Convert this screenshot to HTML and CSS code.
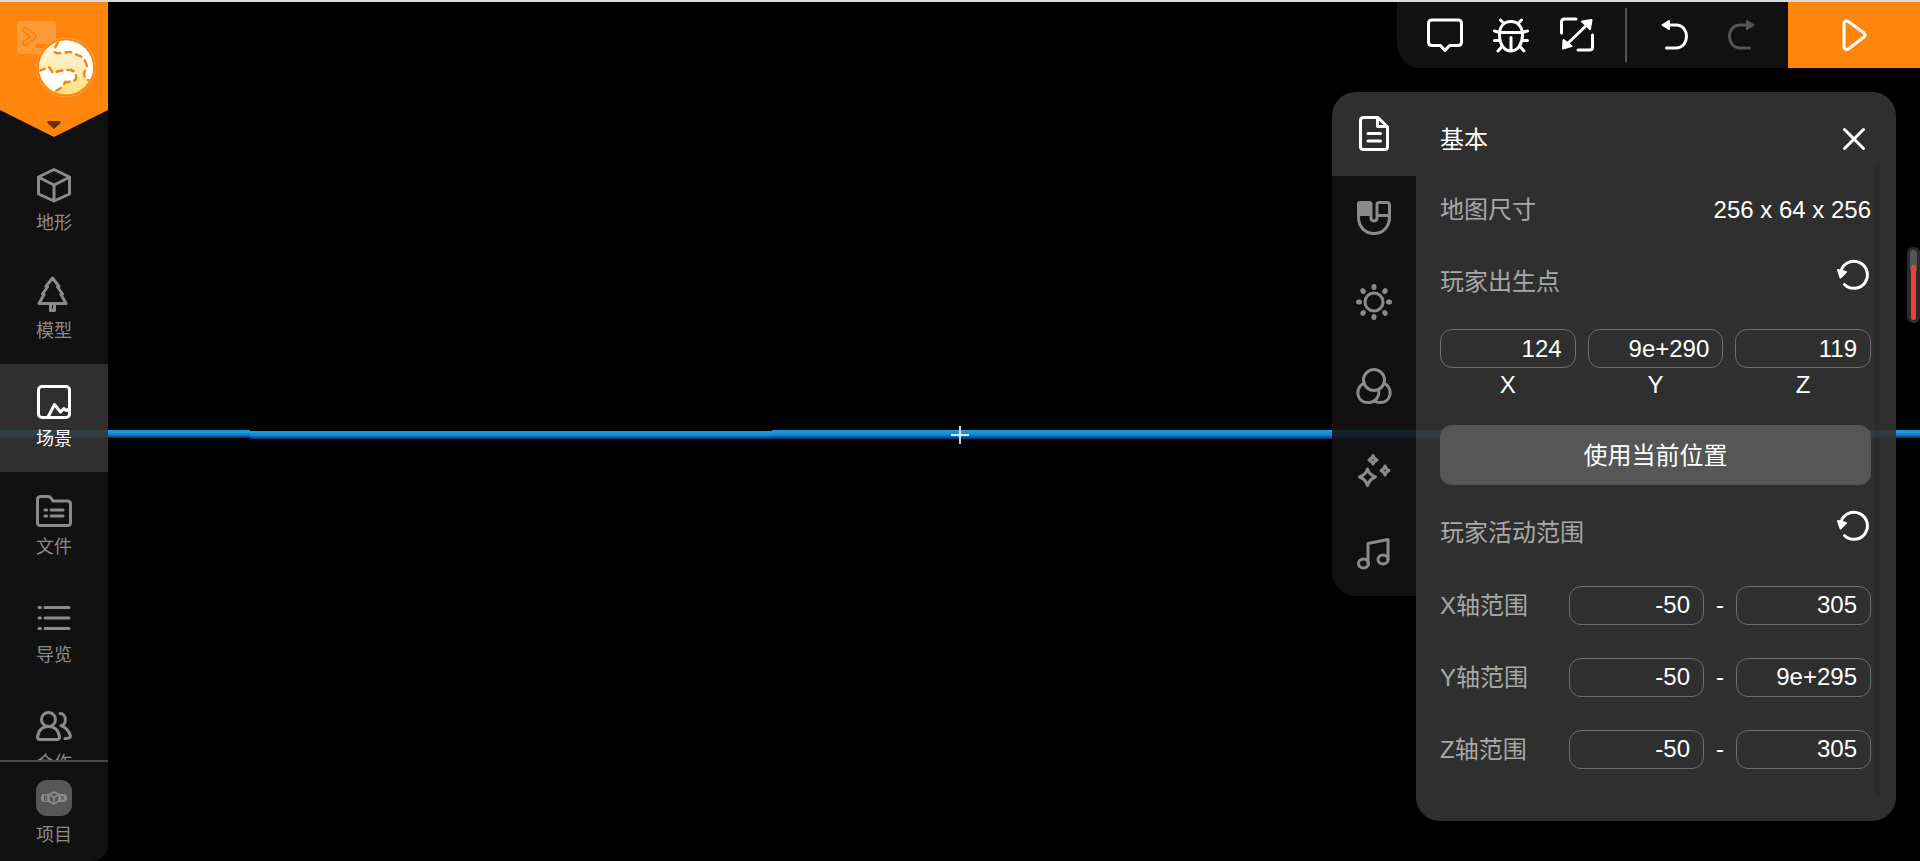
FILE: index.html
```html
<!DOCTYPE html>
<html lang="zh-CN">
<head>
<meta charset="utf-8">
<meta name="viewport" content="width=device-width, initial-scale=1">
<title>场景</title>
<link rel="stylesheet" href="styles.css">
</head>
<body>
<main class="editor">
  <div class="scene">
    <div class="horizon">
      <div class="water water-near"></div>
      <div class="water water-low"></div>
      <div class="water water-deep"></div>
      <div class="water water-high"></div>
      <div class="crosshair"></div>
    </div>
  </div>

  <aside class="sidebar">
    <button class="brand" aria-label="菜单">
      <svg width="108" height="135" viewBox="0 2 108 135">
        <defs>
          <linearGradient id="globe" x1="0" y1="0" x2="0" y2="1"><stop offset="0" stop-color="#fff8e8"/><stop offset="1" stop-color="#ffe27d"/></linearGradient>
          <clipPath id="disc"><circle cx="66" cy="67.500" r="27"/></clipPath>
        </defs>
        <path d="M0 2H108V110L54 137L0 110Z" fill="#ff850c"/>
        <rect x="17" y="21" width="39" height="33" rx="3" fill="#ff9a38"/>
        <path d="M25 30L34 36.500L25 43" fill="none" stroke="#f9800c" stroke-width="6" stroke-linecap="round" stroke-linejoin="round"/>
        <path d="M25 30L34 36.500L25 43" fill="none" stroke="#ff9533" stroke-width="3" stroke-linecap="round" stroke-linejoin="round"/>
        <path d="M37 46H46" stroke="#f9800c" stroke-width="4" stroke-linecap="round"/>
        <circle cx="66" cy="67.500" r="29.500" fill="#ff850c" stroke="#ffa03f" stroke-width="1"/>
        <circle cx="66" cy="67.500" r="27" fill="url(#globe)"/>
        <g clip-path="url(#disc)">
          <path d="M57 40L54 50Q54 54 60 53L70 52L80 56Q85 58 87 66L84 73Q84 78 91 82L100 70L90 36Z" fill="#fff"/>
          <path d="M38 71L49 67L53 73Q60 70 71 70Q77 72 76 79Q74 82 65 82Q62 90 52 92L35 88Z" fill="#fff"/>
          <path d="M58 42L54 50Q54 54 60 53L70 52L80 56Q85 58 87 66L84 73Q84 78 91 82" fill="none" stroke="#f98310" stroke-width="2.400" stroke-dasharray="6 5" stroke-linecap="round"/>
          <path d="M39 71L49 67L53 73Q60 70 71 70Q77 72 76 79Q74 82 65 82Q62 90 52 92" fill="none" stroke="#f98310" stroke-width="2.400" stroke-dasharray="6 5" stroke-linecap="round"/>
        </g>
        <path d="M48 121H60Q61.500 122 60 123.500L54 129L48 123.500Q46.500 122 48 121Z" fill="#663507"/>
      </svg>
    </button>
    <nav class="nav">
      <button class="nav-item">
        <svg class="icon" viewBox="0 0 36 36"><path d="M18 1.500L33.500 9V26L18 33L2.500 26V9ZM3 9.500L18 17L33 9.500M18 17V33"/></svg>
        <span class="nav-label">地形</span>
      </button>
      <button class="nav-item">
        <svg class="icon" viewBox="0 0 36 36"><path d="M16.500 2L10 10.500L11.500 11L6.500 18L8 18.500L3 27.500H30L25 18.500L26.500 18L21.500 11L23 10.500ZM14.500 28V34.500H18.500V28"/></svg>
        <span class="nav-label">模型</span>
      </button>
      <button class="nav-item is-active">
        <svg class="icon" viewBox="0 0 36 36"><rect x="2.500" y="2.500" width="31" height="31" rx="3.500"/><path d="M12 33L18.500 20.500L24.500 28L28 24.500L30 26.500L33.500 25"/></svg>
        <span class="nav-label">场景</span>
      </button>
      <button class="nav-item">
        <svg class="icon" viewBox="0 0 36 36"><path d="M1.500 7.500Q1.500 4.500 4.500 4.500H12Q14 4.500 15 6L17 9H31.500Q34.500 9 34.500 12V30.500Q34.500 33.500 31.500 33.500H4.500Q1.500 33.500 1.500 30.500ZM9 18H10.500M15 18H27M9 24H10.500M15 24H27"/></svg>
        <span class="nav-label">文件</span>
      </button>
      <button class="nav-item">
        <svg class="icon" viewBox="0 0 36 36"><path d="M3 7.500H4.500M9 7.500H33M3 18H4.500M9 18H33M3 28.500H4.500M9 28.500H33"/></svg>
        <span class="nav-label">导览</span>
      </button>
      <button class="nav-item">
        <svg class="icon" viewBox="0 0 36 36"><circle cx="12.500" cy="11.500" r="7"/><path d="M1.500 29C2.500 22.500 6.500 18.500 12.500 18.500S22.500 22.500 23.500 29Q23.500 31.500 21 31.500H4Q1.500 31.500 1.500 29ZM24 5.500C31 5.500 31 17.500 25 17.500C30 19.500 33 23 34.500 28Q34.500 30.500 29 30.500"/></svg>
        <span class="nav-label">合作</span>
      </button>
    </nav>
    <button class="nav-item project">
      <svg class="icon" viewBox="0 0 36 36">
        <rect x="0" y="0" width="36" height="36" rx="11" fill="#575757" stroke="none"/>
        <rect x="5" y="14" width="26" height="8" rx="3.500" fill="#8b8b8b" stroke="none"/>
        <path d="M18 12L23 14.500V21L18 24L13 21V14.500Z" fill="#575757" stroke="#8b8b8b" stroke-width="1.500"/>
        <path d="M14 15L18 17.500L22 15M18 17.500V23" stroke-width="1.500"/>
        <path d="M8.500 16V20.500H10.500V16ZM8.500 18H11M25 16L28 20M28 16L25 20" stroke="#575757" stroke-width="1"/>
      </svg>
      <span class="nav-label">项目</span>
    </button>
  </aside>

  <header class="toolbar">
    <div class="tools">
      <button class="tool" aria-label="消息"><svg class="icon" viewBox="0 0 36 36"><path d="M5 3H31Q34.500 3 34.500 6.500V25Q34.500 28.500 31 28.500H22.500L18 33.500L13.500 28.500H5Q1.500 28.500 1.500 25V6.500Q1.500 3 5 3Z"/></svg></button>
      <button class="tool" aria-label="调试"><svg class="icon" viewBox="0 0 36 36"><path d="M18 4.500C25 4.500 29.500 10 29.500 18S25 34 18 34S6.500 27 6.500 18S11 4.500 18 4.500ZM7 15.500H29M18 20.500V33M11 6.500L7.500 3M25 6.500L28.500 3M7 15.500L1.500 14M29 15.500L34.500 14M6.500 23.500H1.500M29.500 23.500H34.500M9 29.500L5 34M27 29.500L31 34"/></svg></button>
      <button class="tool" aria-label="缩放"><svg class="icon" viewBox="0 0 36 36"><path d="M2.500 16V5Q2.500 2 5.500 2H17M33.500 18V30Q33.500 33 30.500 33H19M6 29L30 6"/><path d="M23 4.500L32.500 3L31 12ZM4.500 23L4 31.500L12.500 29Z" class="solid"/></svg></button>
      <span class="divider"></span>
      <button class="tool" aria-label="撤销"><svg class="icon" viewBox="0 0 36 36"><path d="M8 8H19C33 8 33 31 19 31H9.500"/><path d="M12 4V12L5.500 8Z" class="solid"/></svg></button>
      <button class="tool" aria-label="重做" disabled><svg class="icon" viewBox="0 0 36 36"><path d="M28 8H17C3 8 3 31 17 31H26.500"/><path d="M24 4V12L30.500 8Z" class="solid"/></svg></button>
    </div>
    <button class="play" aria-label="运行"><svg class="icon" viewBox="0 0 36 36"><path d="M8 5.500Q10 3 13 5L28 16Q30 18 28 20L13 31.500Q10 34 8 31Z"/></svg></button>
  </header>

  <section class="settings">
    <div class="tabs">
      <button class="tab is-active" aria-label="基本"><svg class="icon" viewBox="0 0 36 36"><path d="M7.500 1.500H22L31.500 11V30.500Q31.500 33.500 28.500 33.500H7.500Q4.500 33.500 4.500 30.500V4.500Q4.500 1.500 7.500 1.500M21.500 2V10.500H31M12 17.500H24.500M12 25H24.500"/></svg></button>
      <button class="tab" aria-label="物理"><svg class="icon" viewBox="0 0 36 36"><path d="M2.500 4Q2.500 2.500 4 2.500H13Q15 2.500 15 4.500V17.500C15 22 21 22 21 17.500V4.500Q21 2.500 23 2.500H31Q33.500 2.500 33.500 5V17C33.500 39 2.500 39 2.500 17ZM21 15.500H33"/><path d="M3 3H14.500V15H3Z" class="solid"/></svg></button>
      <button class="tab" aria-label="光照"><svg class="icon" viewBox="0 0 36 36"><circle cx="18" cy="18" r="9"/><path class="rays" d="M18 2.500V3.500M18 32.500V33.500M2.500 18H3.500M32.500 18H33.500M6.700 6.700L7.400 7.400M28.600 28.600L29.300 29.300M6.700 29.300L7.400 28.600M28.600 7.400L29.300 6.700"/></svg></button>
      <button class="tab" aria-label="滤镜"><svg class="icon" viewBox="0 0 36 36"><circle cx="18" cy="12" r="10.500"/><path d="M8 15C-2 21 1 34.500 12 34.500C20 34.500 24 28 22.500 22M28 15C38 21 35 34.500 24 34.500Q21 34.500 18.500 33"/></svg></button>
      <button class="tab" aria-label="特效"><svg class="icon" viewBox="0 0 36 36"><path d="M11.500 17Q13.500 23 19.500 25Q13.500 27 11.500 33.500Q9.500 27 3.500 25Q9.500 23 11.500 17ZM17 3.500Q18 7 21 8Q18 9 17 12Q16 9 13 8Q16 7 17 3.500ZM29 14Q30 17.500 33 18.500Q30 19.500 29 23Q28 19.500 25 18.500Q28 17.500 29 14Z"/></svg></button>
      <button class="tab" aria-label="音乐"><svg class="icon" viewBox="0 0 36 36"><ellipse cx="7.500" cy="27.500" rx="5" ry="4.500"/><ellipse cx="27" cy="23.500" rx="5" ry="4.500"/><path d="M12 27.500V7.500L32 3.500V23.500"/></svg></button>
    </div>

    <form class="panel">
      <div class="panel-head">
        <h1 class="panel-title">基本</h1>
        <button type="button" class="icon-button" aria-label="关闭"><svg class="icon" viewBox="0 0 36 36"><path d="M9.500 8.500L28.500 27.500M28.500 8.500L9.500 27.500"/></svg></button>
      </div>
      <div class="panel-body">
        <div class="row"><span class="label">地图尺寸</span><span class="value">256 x 64 x 256</span></div>
        <div class="row">
          <span class="label">玩家出生点</span>
          <button type="button" class="icon-button" aria-label="重置出生点"><svg class="icon" viewBox="0 0 36 36"><path d="M6 14A13.500 13.500 0 1 1 9.500 27.500"/><path d="M3 13L11 15L5.500 20.500Z" class="solid"/></svg></button>
        </div>
        <div class="axes">
          <label class="axis"><input class="field" type="text" value="124"><span>X</span></label>
          <label class="axis"><input class="field" type="text" value="9e+290"><span>Y</span></label>
          <label class="axis"><input class="field" type="text" value="119"><span>Z</span></label>
        </div>
        <button type="button" class="primary">使用当前位置</button>
        <div class="row">
          <span class="label">玩家活动范围</span>
          <button type="button" class="icon-button" aria-label="重置活动范围"><svg class="icon" viewBox="0 0 36 36"><path d="M6 14A13.500 13.500 0 1 1 9.500 27.500"/><path d="M3 13L11 15L5.500 20.500Z" class="solid"/></svg></button>
        </div>
        <div class="range"><label class="label" for="x-min">X轴范围</label><input class="field" id="x-min" type="text" value="-50"><span class="dash">-</span><input class="field" aria-label="X轴最大值" type="text" value="305"></div>
        <div class="range"><label class="label" for="y-min">Y轴范围</label><input class="field" id="y-min" type="text" value="-50"><span class="dash">-</span><input class="field" aria-label="Y轴最大值" type="text" value="9e+295"></div>
        <div class="range"><label class="label" for="z-min">Z轴范围</label><input class="field" id="z-min" type="text" value="-50"><span class="dash">-</span><input class="field" aria-label="Z轴最大值" type="text" value="305"></div>
      </div>
    </form>
  </section>

  <div class="meter"><div class="meter-track"><div class="meter-fill"></div></div></div>
</main>
</body>
</html>
```

FILE: styles.css
```css
* { box-sizing: border-box; }

body {
  margin: 0;
  background: #000;
  color: #fff;
  font-family: "Liberation Sans", "Noto Sans CJK SC", sans-serif;
  font-size: 24px;
}

button, input {
  margin: 0;
  padding: 0;
  border: 0;
  background: none;
  color: inherit;
  font: inherit;
}

.editor {
  position: relative;
  height: 100vh;
  border-top: 2px solid #dcdcdc;
  overflow: hidden;
}

.icon {
  display: block;
  width: 36px;
  height: 36px;
  fill: none;
  stroke: currentColor;
  stroke-width: 3;
  stroke-linecap: round;
  stroke-linejoin: round;
}

.icon .solid { fill: currentColor; stroke-width: 2; }
.icon .rays { stroke-width: 5; }

/* 3D view */
.scene {
  position: absolute;
  inset: 0;
  display: flex;
  flex-direction: column;
  justify-content: center;
  padding-top: 7px;
}

.horizon {
  position: relative;
  display: grid;
  grid-template-columns: 13% 27.200% 53.800% 6%;
  height: 10px;
}

.water {
  height: 8px;
  background: linear-gradient(#1b9edc, #178fd2 45%, #0b62b0 75%, #022a66);
}

.water-low { margin-top: 1px; }
.water-deep { height: 9px; }
.water-high { height: 8px; }

.crosshair {
  position: absolute;
  left: 50%;
  top: 50%;
  width: 18px;
  height: 18px;
  transform: translate(-50%, -50%);
  background:
    linear-gradient(#fffc, #fffc) center / 2px 18px no-repeat,
    linear-gradient(#fffc, #fffc) center / 18px 2px no-repeat;
}

/* Left sidebar */
.sidebar {
  position: absolute;
  inset: 0 auto 0 0;
  display: flex;
  flex-direction: column;
  width: 108px;
  border-radius: 0 0 16px 0;
  background: rgba(19, 19, 19, 0.88);
}

.brand { flex: none; height: 135px; }
.brand svg { display: block; }

.nav {
  flex: 1;
  min-height: 0;
  padding-top: 11px;
  overflow: hidden;
}

.nav-item {
  display: flex;
  flex-direction: column;
  align-items: center;
  gap: 6px;
  width: 100%;
  height: 108px;
  padding-top: 20px;
  color: #8b8b8b;
}

.nav-item.is-active, .tab.is-active {
  background: rgba(255, 255, 255, 0.13);
  color: #fff;
}

.nav-label { font-size: 18px; line-height: 26px; }

.project {
  flex: none;
  height: 101px;
  padding-top: 18px;
  border-top: 2px solid #4a4a4a;
}

/* Top toolbar */
.toolbar {
  position: absolute;
  top: 0;
  right: 0;
  display: flex;
  height: 66px;
}

.tools {
  display: flex;
  align-items: center;
  gap: 30px;
  padding: 0 29px 0 30px;
  border-radius: 0 0 0 24px;
  background: #111;
}

.divider { width: 2px; height: 54px; background: #555; }
.tool:disabled { color: #555; }

.play {
  display: grid;
  place-items: center;
  width: 132px;
  background: #ff850c;
}

/* Scene settings */
.settings {
  position: absolute;
  top: 90px;
  right: 24px;
  display: flex;
  align-items: flex-start;
}

.tabs {
  width: 84px;
  border-radius: 24px 0 0 24px;
  background: rgba(19, 19, 19, 0.88);
  overflow: hidden;
}

.tab {
  display: grid;
  place-items: center;
  width: 100%;
  height: 84px;
  color: #8b8b8b;
}

.panel {
  width: 480px;
  padding: 24px 16px 24px 24px;
  border-radius: 0 24px 24px 0;
  border-bottom-left-radius: 24px;
  background: rgba(52, 52, 52, 0.91);
}

.panel-head {
  display: flex;
  align-items: center;
  justify-content: space-between;
  height: 46px;
  padding-right: 9px;
}

.panel-title {
  margin: 0;
  padding-bottom: 3px;
  font-size: 24px;
  font-weight: 400;
}

.panel-body {
  padding: 12px 4px 12px 0;
  border-right: 5px solid rgba(0, 0, 0, 0.07);
}

.row {
  display: flex;
  justify-content: space-between;
  line-height: 72px;
}

.label { color: #a8a8a8; }

.icon-button {
  display: grid;
  align-items: center;
  height: 58px;
}

.axes {
  display: grid;
  grid-template-columns: repeat(3, 1fr);
  gap: 12px;
  padding-top: 11px;
}

.axis { text-align: center; line-height: 34px; }
.axis span { display: block; }

.field {
  display: block;
  width: 100%;
  min-width: 0;
  height: 39px;
  padding: 0 13px;
  border: 1px solid #6e6e6e;
  border-radius: 12px;
  text-align: right;
}

.primary {
  width: 100%;
  height: 60px;
  margin: 23px 0 12px;
  padding-bottom: 3px;
  border-radius: 12px;
  background: #565656;
}

.range {
  display: grid;
  grid-template-columns: 129px 1fr 32px 1fr;
  align-items: center;
  height: 72px;
}

.range .label { padding-bottom: 3px; }
.dash { text-align: center; }

/* Vertical meter on the window edge */
.meter {
  position: absolute;
  top: 245px;
  right: 0;
  width: 13px;
  height: 76px;
  padding: 3px;
  border-radius: 6px;
  background: #2a2a2a;
}

.meter-track {
  display: flex;
  align-items: flex-end;
  height: 100%;
  padding: 0 1px;
  border-radius: 4px;
  background: linear-gradient(#555 30%, #2a2a2a 30%);
}

.meter-fill {
  width: 100%;
  height: 78%;
  border-radius: 3px;
  background: #fb3a3a;
}
```
